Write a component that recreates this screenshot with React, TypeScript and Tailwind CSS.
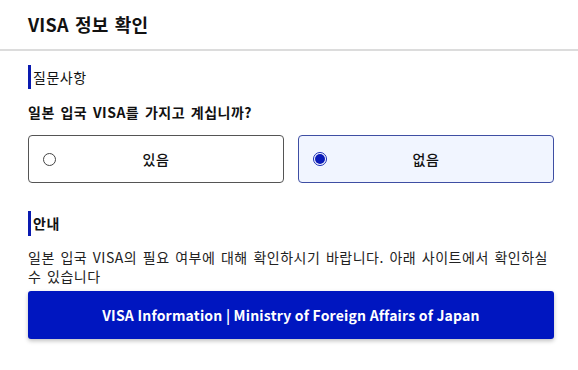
export default function App() {
  return (
    <div className="w-[578px] h-[370px] bg-white text-[#111] font-['Noto_Sans_CJK_KR','Noto_Sans',sans-serif]">
      <header className="h-[51px] flex items-center pl-[28px] border-b-2 border-[#dcdcdc]">
        <h1 className="text-[18px] font-bold tracking-[0.2px] [word-spacing:2px]">VISA 정보 확인</h1>
      </header>

      <div className="pl-[28px] pr-[24px] pt-[14px]">
        <div className="flex items-center h-[24px] border-l-[3px] border-[#0a1ab0] pl-[2px] text-[14px] tracking-[0.5px]">질문사항</div>
        <p className="mt-[13px] text-[14px] font-bold leading-[20px] tracking-[0.5px] [word-spacing:2px]">일본 입국 VISA를 가지고 계십니까?</p>

        <div className="mt-[13px] flex gap-[14px]">
          <label className="relative flex-1 h-[48px] flex items-center justify-center rounded-[4px] border border-[#555] text-[14px] font-medium tracking-[0.5px]">
            <span className="absolute left-[14px] w-[13px] h-[13px] rounded-full border border-[#444] bg-white" />
            있음
          </label>
          <label className="relative flex-1 h-[48px] flex items-center justify-center rounded-[4px] border border-[#3e4ea3] bg-[#f1f5ff] text-[14px] font-medium tracking-[0.5px]">
            <span className="absolute left-[14px] w-[14px] h-[14px] rounded-full border border-[#1428b4] flex items-center justify-center bg-white">
              <span className="w-[10px] h-[10px] rounded-full bg-[#0a1ab8]" />
            </span>
            없음
          </label>
        </div>

        <div className="mt-[28px] flex items-center h-[25px] border-l-[3px] border-[#0a1ab0] pl-[2px] text-[14px] font-bold tracking-[0.5px]">안내</div>
        <p className="mt-[12px] text-[14px] leading-[19px] text-[#222] tracking-[0.5px] [word-spacing:2px] break-keep">
          일본 입국 VISA의 필요 여부에 대해 확인하시기 바랍니다. 아래 사이트에서 확인하실 수 있습니다
        </p>
        <button className="mt-[5px] w-full h-[48px] rounded-[3px] bg-[#0016c0] text-white text-[14px] font-bold tracking-[0.2px] shadow-[0_2px_4px_rgba(0,0,0,0.25)]">
          VISA Information | Ministry of Foreign Affairs of Japan
        </button>
      </div>
    </div>
  )
}
